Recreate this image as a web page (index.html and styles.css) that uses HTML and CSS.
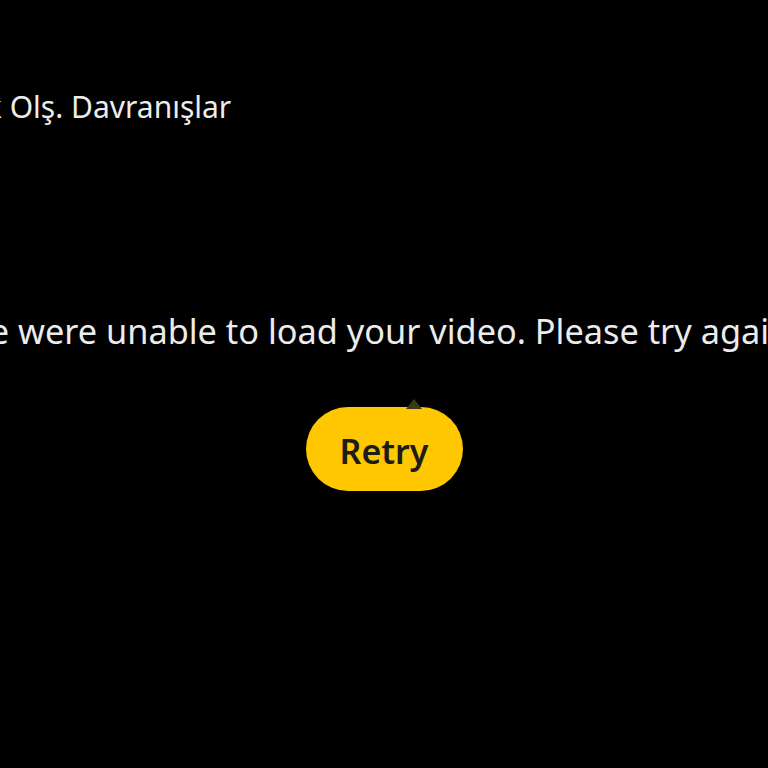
FILE: index.html
```html
<!DOCTYPE html>
<html lang="en">
<head>
    <meta charset="UTF-8">
    <meta name="viewport" content="width=device-width, initial-scale=1.0">
    <title>Video</title>
    <link rel="stylesheet" href="styles.css">
</head>
<body>

    <!-- Player header -->
    <div class="player-header">
        <span class="video-title">Trafik Olş. Davranışlar</span>
    </div>

    <!-- Error state -->
    <div class="error-panel">
        <p class="error-message">We were unable to load your video. Please try again.</p>
        <div class="retry-wrap">
            <span class="spinner-tip"></span>
            <button class="retry-button">Retry</button>
        </div>
    </div>

</body>
</html>
```

FILE: styles.css
```css
html, body {
    margin: 0;
    padding: 0;
    background: #000;
    overflow: hidden;
}

body {
    width: 768px;
    height: 768px;
    font-family: 'Noto Sans', 'Open Sans', sans-serif;
    color: #ececec;
}

.player-header {
    height: 140px;
    padding-top: 87px;
    box-sizing: border-box;
    white-space: nowrap;
}

.video-title {
    display: inline-block;
    margin-left: -76px;
    font-size: 30px;
    line-height: 40px;
}

.error-panel {
    display: flex;
    flex-direction: column;
    align-items: center;
    padding-top: 168px;
}

.error-message {
    margin: 0 10px 0 0;
    font-size: 34.3px;
    line-height: 46px;
    white-space: nowrap;
}

.retry-wrap {
    position: relative;
    margin-top: 53px;
}

.spinner-tip {
    position: absolute;
    top: -8px;
    left: 100px;
    width: 0;
    height: 0;
    border-left: 8px solid transparent;
    border-right: 8px solid transparent;
    border-bottom: 10px solid #3a3b12;
}

.retry-button {
    display: block;
    width: 157px;
    height: 84px;
    padding: 4px 0 0;
    border: none;
    border-radius: 42px;
    background: #ffc700;
    color: #1c1c1c;
    font-family: 'Noto Sans', 'Open Sans', sans-serif;
    font-size: 34px;
    font-weight: 600;
    cursor: pointer;
}
```
